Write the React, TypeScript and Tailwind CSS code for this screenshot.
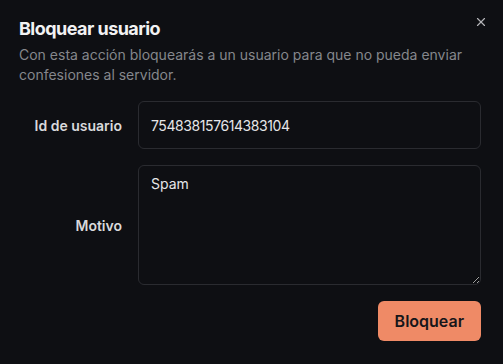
import { X } from 'lucide-react'

export default function App() {
  return (
    <div
      className="min-h-screen w-full bg-[#0e0f13] text-white"
      style={{ fontFamily: 'Inter, "Noto Sans", sans-serif' }}
    >
      <div className="relative pl-[19px] pr-[22px] pt-[15px]">
        <button className="absolute right-[15px] top-[15px] text-[#b4b4b8]" aria-label="Cerrar">
          <X size={14} strokeWidth={2} />
        </button>
        <h2 className="text-[18px] leading-[28px] font-bold tracking-[-0.03em] text-[#f2f2f3]">Bloquear usuario</h2>
        <p className="mt-[2px] text-[14px] leading-[20px] text-[#85878c]">
          Con esta acción bloquearás a un usuario para que no pueda enviar confesiones al servidor.
        </p>

        <div className="mt-4 flex flex-col gap-4">
          <div className="flex items-center gap-4">
            <label className="w-[103px] shrink-0 text-right text-[14px] font-semibold text-[#d9d9db]">Id de usuario</label>
            <input
              defaultValue="754838157614383104"
              className="h-[48px] flex-1 rounded-md border border-[#2a2b30] bg-transparent px-3 text-[14px] tracking-[-0.03em] text-[#e6e6e8] outline-none"
            />
          </div>
          <div className="flex items-center gap-4">
            <label className="w-[103px] shrink-0 text-right text-[14px] font-semibold text-[#d9d9db]">Motivo</label>
            <textarea
              defaultValue="Spam"
              className="h-[120px] flex-1 rounded-md border border-[#2a2b30] bg-transparent px-3 py-2 text-[14px] leading-[20px] text-[#e6e6e8] outline-none"
            />
          </div>
          <div className="flex justify-end">
            <button className="h-[40px] rounded-md bg-[#ef8a66] px-[17px] text-[16px] font-semibold text-[#16161a]">
              Bloquear
            </button>
          </div>
        </div>
      </div>
    </div>
  )
}
